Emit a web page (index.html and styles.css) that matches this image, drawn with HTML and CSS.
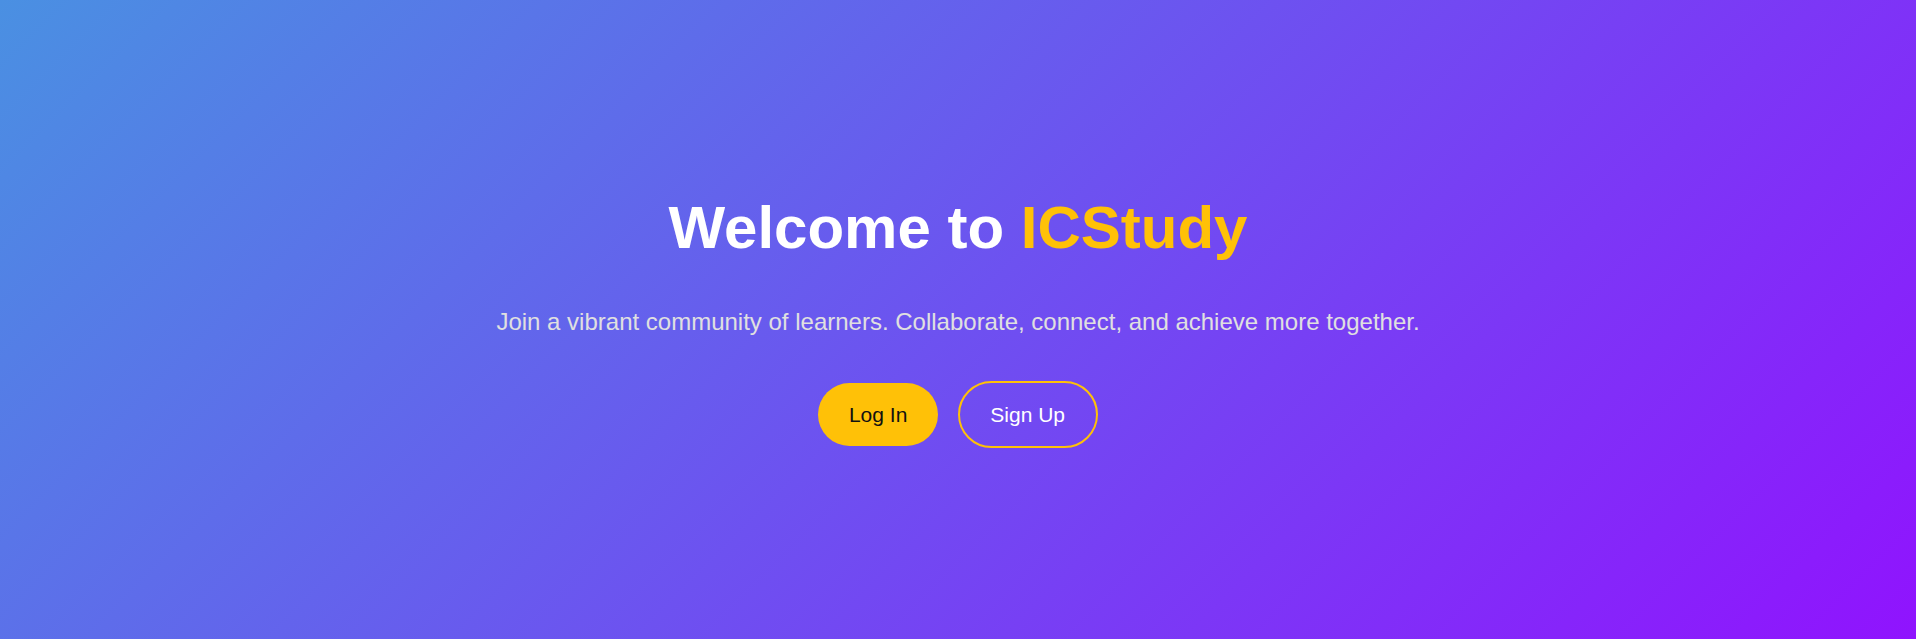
FILE: index.html
```html
<!DOCTYPE html>
<html lang="en">
<head>
<meta charset="utf-8">
<title>ICStudy</title>
<link rel="stylesheet" href="styles.css">
</head>
<body>
<section class="hero">
  <div class="hero-content">
    <h1 class="hero-title">Welcome to <span class="brand">ICStudy</span></h1>
    <p class="hero-text">Join a vibrant community of learners. Collaborate, connect, and achieve more together.</p>
    <div class="hero-actions">
      <a class="btn btn-primary" href="#">Log In</a>
      <a class="btn btn-outline" href="#">Sign Up</a>
    </div>
  </div>
</section>
</body>
</html>
```

FILE: styles.css
```css
html, body {
  margin: 0;
  padding: 0;
  background: #ffffff;
}

body {
  font-family: "Liberation Sans", Arial, sans-serif;
}

.hero {
  height: 639px;
  padding-top: 2px;
  box-sizing: border-box;
  background: linear-gradient(135deg, #4a90e2 0%, #9013fe 100%);
  display: flex;
  align-items: center;
  justify-content: center;
  text-align: center;
}

.hero-content {
  display: flex;
  flex-direction: column;
  align-items: center;
}

.hero-title {
  margin: 0;
  font-size: 60px;
  font-weight: 700;
  line-height: normal;
  color: #ffffff;
}

.brand {
  color: #ffc107;
}

.hero-text {
  margin: 46px 0 0;
  font-size: 24px;
  line-height: normal;
  color: #e0e0e0;
}

.hero-actions {
  margin-top: 45px;
  display: flex;
  align-items: center;
  gap: 20px;
}

.btn {
  display: inline-block;
  font-size: 21px;
  line-height: 24px;
  padding: 19.5px 30.5px;
  border-radius: 40px;
  text-decoration: none;
}

.btn-primary {
  background: #ffc107;
  color: #111111;
}

.btn-outline {
  border: 2px solid #ffc107;
  color: #ffffff;
  background: transparent;
}
```
